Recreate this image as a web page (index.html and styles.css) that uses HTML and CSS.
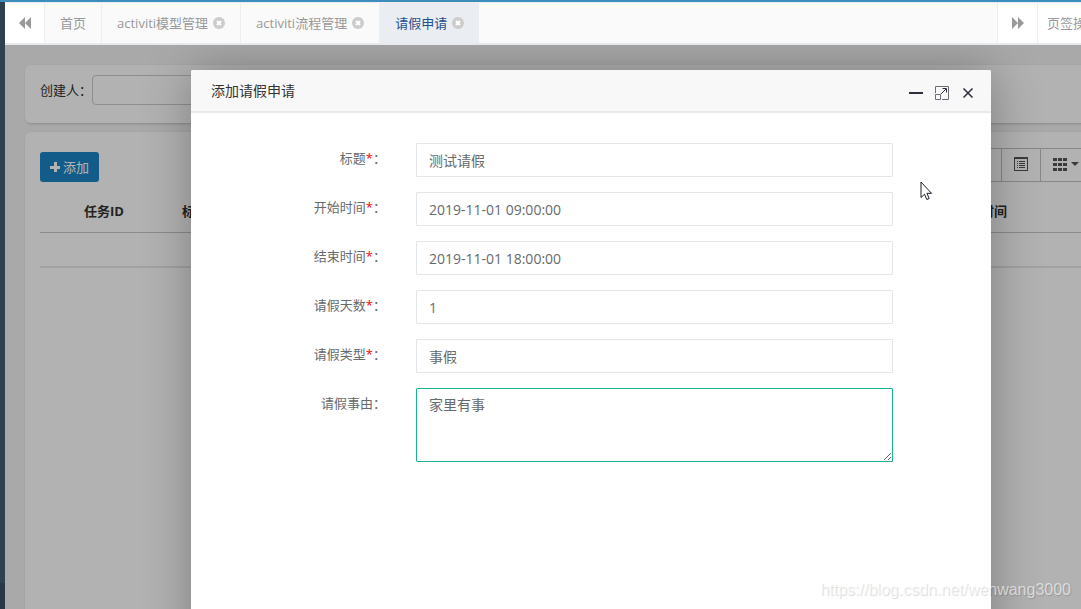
FILE: index.html
```html
<!DOCTYPE html>
<html lang="zh-CN">
<head>
<meta charset="utf-8">
<title>请假申请</title>
<link rel="stylesheet" href="styles.css">
</head>
<body>
<div class="app">
  <aside class="sidebar"><div class="sidebar-foot"></div></aside>
  <div class="page">
    <nav class="tabs">
      <button class="tab-roll" type="button" aria-label="向左滚动">
        <svg width="14" height="12" viewBox="0 0 14 12"><path d="M7 0v12L1 6zM13 0v12L7 6z"/></svg>
      </button>
      <div class="tab-list">
        <a class="tab" href="#">首页</a>
        <a class="tab" href="#">activiti模型管理
          <svg class="tab-close" width="12" height="12" viewBox="0 0 12 12"><circle cx="6" cy="6" r="6"/><path d="M4 4l4 4M8 4l-4 4"/></svg></a>
        <a class="tab" href="#">activiti流程管理
          <svg class="tab-close" width="12" height="12" viewBox="0 0 12 12"><circle cx="6" cy="6" r="6"/><path d="M4 4l4 4M8 4l-4 4"/></svg></a>
        <a class="tab tab-active" href="#">请假申请
          <svg class="tab-close" width="12" height="12" viewBox="0 0 12 12"><circle cx="6" cy="6" r="6"/><path d="M4 4l4 4M8 4l-4 4"/></svg></a>
      </div>
      <button class="tab-roll tab-roll-right" type="button" aria-label="向右滚动">
        <svg width="14" height="12" viewBox="0 0 14 12"><path d="M1 0v12l6-6zM7 0v12l6-6z"/></svg>
      </button>
      <button class="tab-menu" type="button">页签操作</button>
    </nav>

    <div class="content">
      <main class="panels">
        <form class="card search">
          <label for="creator">创建人：</label>
          <input class="search-input" id="creator" type="text">
        </form>
        <section class="card list">
          <div class="toolbar">
            <button class="btn-add" type="button">
              <svg width="10" height="10" viewBox="0 0 10 10"><path d="M4 0h3v4h3v3H7v3H4V7H0V4h4z"/></svg>添加</button>
            <div class="tools">
              <button class="tool" type="button" aria-label="刷新"></button>
              <button class="tool" type="button" aria-label="切换视图">
                <svg width="14" height="14" viewBox="0 0 14 14"><path fill-rule="evenodd" d="M0 0h14v14H0zM1 2v11h12V2z"/><path d="M3 4h1v1H3zM3 6h1v1H3zM3 8h1v1H3zM3 10h1v1H3zM5 4h6v1H5zM5 6h6v1H5zM5 8h6v1H5zM5 10h6v1H5z"/></svg>
              </button>
              <button class="tool" type="button" aria-label="列">
                <svg width="14" height="13" viewBox="0 0 14 13"><path d="M0 0h4v3H0zM5 0h4v3H5zM10 0h4v3h-4zM0 5h4v3H0zM5 5h4v3H5zM10 5h4v3h-4zM0 10h4v3H0zM5 10h4v3H5zM10 10h4v3h-4z"/></svg>
                <svg width="8" height="4" viewBox="0 0 8 4"><path d="M0 0h8L4 4z"/></svg>
              </button>
            </div>
          </div>
          <table class="grid">
            <thead><tr><th class="col-check"></th><th class="col-id">任务ID</th><th>标题</th><th class="col-time">开始时间</th></tr></thead>
            <tbody><tr><td colspan="4"></td></tr></tbody>
          </table>
        </section>
      </main>

      <div class="shade">
        <section class="dialog" role="dialog" aria-labelledby="dialog-title">
          <header class="dialog-head">
            <h2 class="dialog-title" id="dialog-title">添加请假申请</h2>
            <button class="dialog-btn" type="button" aria-label="最小化">
              <svg width="14" height="14" viewBox="0 0 14 14"><path class="solid" d="M0 6h14v2H0z"/></svg>
            </button>
            <button class="dialog-btn" type="button" aria-label="最大化">
              <svg width="14" height="14" viewBox="0 0 14 14"><path class="thin" d="M.5 7V.5h13v13H7M.5 8.500h5v5h-5z"/><path d="M6 8l5-5M7.500 2.500h4v4"/></svg>
            </button>
            <button class="dialog-btn" type="button" aria-label="关闭">
              <svg width="14" height="14" viewBox="0 0 14 14"><path class="bold" d="M2.500 2.500l9 9M11.500 2.500l-9 9"/></svg>
            </button>
          </header>
          <form class="form">
            <label for="f-title">标题<span class="req">*</span>：</label>
            <input class="field" id="f-title" type="text" value="测试请假">
            <label for="f-start">开始时间<span class="req">*</span>：</label>
            <input class="field" id="f-start" type="text" value="2019-11-01 09:00:00">
            <label for="f-end">结束时间<span class="req">*</span>：</label>
            <input class="field" id="f-end" type="text" value="2019-11-01 18:00:00">
            <label for="f-days">请假天数<span class="req">*</span>：</label>
            <input class="field" id="f-days" type="text" value="1">
            <label for="f-type">请假类型<span class="req">*</span>：</label>
            <input class="field" id="f-type" type="text" value="事假">
            <label for="f-reason">请假事由：</label>
            <textarea class="field field-area" id="f-reason">家里有事</textarea>
          </form>
        </section>
      </div>
    </div>
  </div>
</div>
<svg class="pointer" width="13" height="20" viewBox="0 0 13 20"><path d="M1 1v15.500l3.500-3.300 2.300 5.300 2.400-1-2.300-5.200h4.600z"/></svg>
<div class="watermark">https://blog.csdn.net/wenwang3000</div>
</body>
</html>
```

FILE: styles.css
```css
* { box-sizing: border-box; }
body {
  margin: 0;
  font: 13px/19px "Open Sans", "Noto Sans CJK SC", sans-serif;
  color: #676a6c;
  overflow: hidden;
}
button, input, textarea { font: inherit; color: inherit; margin: 0; }
button { cursor: pointer; }

.app { display: flex; height: 100vh; border-top: 2px solid #3c8dbc; }
.sidebar { display: flex; flex-direction: column; justify-content: flex-end; flex: none; width: 5px; background: #2f4050; }
.sidebar-foot { height: 26px; background: #293846; }
.page { display: flex; flex-direction: column; flex: 1; min-width: 0; }

.tabs {
  display: flex;
  flex: none;
  height: 43px;
  background: #fafafa;
  border-top: 1px solid #eee;
  border-bottom: 2px solid #e7eaec;
  color: #999;
  overflow: hidden;
}
.tab-list { display: flex; flex: 1; }
.tab-roll, .tab-menu { flex: none; background: #fff; border: 0; padding: 0; }
.tab-roll { display: flex; align-items: center; justify-content: center; width: 40px; border-right: 1px solid #eee; fill: #999; }
.tab-roll-right { width: 41px; border-left: 1px solid #eee; }
.tab-menu { width: 43px; padding-left: 9px; text-align: left; white-space: nowrap; overflow: hidden; }
.tab { display: flex; align-items: center; gap: 5px; padding: 0 15px; border-right: 1px solid #eee; color: #999; text-decoration: none; white-space: nowrap; }
.tab-active { background: #eaedf1; border-right: 0; color: #23508e; }
.tab-close { fill: #ccc; stroke: #fff; stroke-width: 2; }
.tab-close circle { stroke: none; }

.content { display: grid; flex: 1; min-height: 0; overflow: hidden; background: #f3f3f4; }
.content > * { grid-area: 1 / 1; min-width: 0; }
.panels { display: flex; flex-direction: column; gap: 9px; margin: 20px -26px -10px 20px; color: #333; }
.card { background: #fff; border-radius: 6px; box-shadow: 1px 1px 3px rgba(0, 0, 0, .2); padding: 10px 15px; }
.search { display: flex; align-items: flex-start; height: 58px; }
.search label { line-height: 30px; }
.search-input { width: 200px; height: 30px; background: transparent; border: 1px solid #ccc; border-radius: 4px; padding: 0 8px; }
.list { flex: 1; padding-top: 16px; }
.toolbar { display: flex; justify-content: space-between; align-items: flex-start; }
.btn-add { display: flex; align-items: center; gap: 3px; height: 30px; margin-top: 4px; padding: 0 10px; border: 0; border-radius: 3px; background: #1c84c6; color: #fff; fill: #fff; line-height: 16px; }
.tools { display: flex; }
.tool { display: flex; align-items: center; justify-content: center; gap: 4px; min-width: 40px; height: 34px; margin-left: -1px; padding: 0 12px 2px; border: 1px solid #c2c2c2; background: transparent; fill: #555; }
.grid { width: 100%; margin-top: 10px; border-collapse: collapse; table-layout: fixed; }
.grid th { height: 40px; padding: 0 8px; text-align: left; border-bottom: 1px solid #c6c6c6; }
.grid td { height: 35px; border-bottom: 2px solid #e7e7e7; }
.col-check { width: 36px; }
.col-id { width: 98px; }
.col-time { width: 145px; }

.shade { display: flex; padding: 25px 90px 0 186px; background: rgba(0, 0, 0, .3); position: relative; }
.dialog { flex: 1; min-width: 0; margin-bottom: -60px; background: #fff; border-radius: 2px; box-shadow: 1px 1px 50px rgba(0, 0, 0, .3); }
.dialog-head { display: flex; align-items: center; gap: 12px; height: 43px; padding: 0 16px 0 20px; background: #f8f8f8; border-bottom: 2px solid #e7eaec; border-radius: 2px 2px 0 0; }
.dialog-title { flex: 1; margin: 0; font-size: 14px; font-weight: 400; color: #333; }
.dialog-btn { display: flex; padding: 4px 0 0; border: 0; background: none; fill: none; stroke: #2e2d3c; }
.dialog-btn .solid { fill: #2e2d3c; stroke: none; }
.dialog-btn .thin { stroke: #6b6a76; }

.form { display: grid; grid-template-columns: 195px 1fr; column-gap: 30px; row-gap: 15px; padding: 30px 98px 30px 0; }
.form label { padding-top: 6px; text-align: right; }
.dialog-btn .bold { stroke-width: 1.5; }
.req { color: #f00; }
.field { width: 100%; height: 34px; padding: 6px 12px; font-size: 14px; line-height: 20px; border: 1px solid #e5e6e7; border-radius: 1px; background: #fff; outline: 0; }
.field-area { display: block; height: 74px; border-color: #1ab394; resize: vertical; }

.pointer { position: absolute; left: 920px; top: 181px; fill: #fff; stroke: #1b1b28; pointer-events: none; }
.watermark { position: absolute; right: 10px; bottom: 9px; font: 16px/20px "Liberation Sans", sans-serif; color: rgba(255, 255, 255, .6); text-shadow: 1px 1px 1px rgba(0, 0, 0, .15); pointer-events: none; }
```
